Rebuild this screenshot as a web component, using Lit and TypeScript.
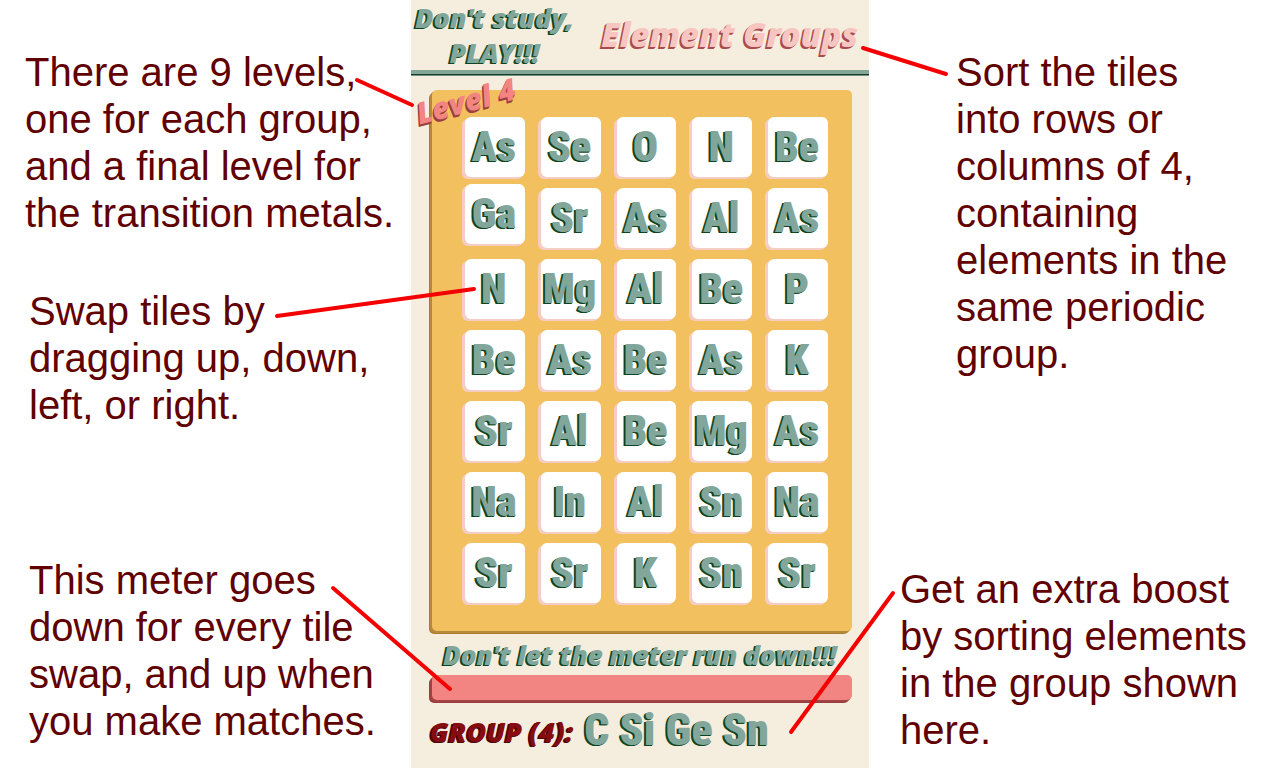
import { LitElement, html, css } from "lit";
import { customElement, property } from "lit/decorators.js";
import { classMap } from "lit/directives/class-map.js";

const TILES: string[] = [
  "As", "Se", "O", "N", "Be",
  "Ga", "Sr", "As", "Al", "As",
  "N", "Mg", "Al", "Be", "P",
  "Be", "As", "Be", "As", "K",
  "Sr", "Al", "Be", "Mg", "As",
  "Na", "In", "Al", "Sn", "Na",
  "Sr", "Sr", "K", "Sn", "Sr",
];
const LIFTED_TILE = 5;

@customElement("game-board")
class GameBoard extends LitElement {
  @property({ type: Array }) tiles: string[] = TILES;

  static styles = css`
    :host {
      display: block;
      position: relative;
      margin: 0 17px 0 21px;
    }
    .board {
      display: grid;
      grid-template-columns: repeat(5, minmax(0, 1fr));
      gap: 11px 16px;
      padding: 27px 24px 28px 33px;
      background: #f3c05f;
      border-radius: 5px;
      box-shadow: -1px 1px #b8893a, -2px 2px #b8893a, -3px 3px #a97c33;
    }
    .tile {
      display: flex;
      justify-content: center;
      height: 60px;
      border: 0;
      padding: 0 2px 0 0;
      border-radius: 6px;
      background: #fff;
      color: #82a699;
      font: 900 42px/60px "Roboto Condensed", Lato, sans-serif;
      text-shadow: -1px 1px #0d4420, -2px 1px #0d4420;
      box-shadow: -1px 1px #f5cdc4, -2px 2px #f5cdc4, -3px 2px #f5cdc4;
      white-space: nowrap;
    }
    .lifted {
      position: relative;
      top: -4px;
    }
    .level {
      position: absolute;
      left: -17px;
      top: -6px;
      margin: 0;
      transform: rotate(-15deg);
      font: italic 800 30px/34px "Open Sans", sans-serif;
      color: #f28582;
      text-shadow: -1px 1px #98403f, -2px 2px #98403f;
      white-space: nowrap;
    }
  `;

  render() {
    return html`
      <div class="board">
        ${this.tiles.map(
          (t, i) => html`<button class=${classMap({ tile: true, lifted: i === LIFTED_TILE })}>${t}</button>`
        )}
      </div>
      <p class="level">Level 4</p>
    `;
  }
}

@customElement("app-root")
class AppRoot extends LitElement {
  static styles = css`
    :host {
      display: block;
      position: relative;
      min-height: 100vh;
      background: #fff;
    }
    .page {
      display: grid;
      grid-template-columns: 411fr 458fr 411fr;
      min-height: 100vh;
    }
    .side {
      display: flex;
      flex-direction: column;
      padding-top: 49px;
      color: #600000;
      font: 40px/47px "Liberation Sans", Arial, sans-serif;
      white-space: nowrap;
    }
    .note {
      margin: 0;
      padding-left: 29px;
    }
    .levels {
      padding-left: 25px;
      margin-bottom: 51px;
    }
    .swap {
      margin-bottom: 128px;
    }
    .sort {
      padding-left: 87px;
      margin-bottom: 188px;
    }
    .boost {
      padding-left: 31px;
    }
    .game {
      background: #f5eedf;
      min-width: 0;
    }
    .header {
      display: flex;
      justify-content: space-between;
      align-items: center;
      height: 70px;
      padding: 0 11px 0 4px;
      border-bottom: 4px solid #83a699;
      box-shadow: 0 1px #173f2a, 0 2px #6f9484;
      margin-bottom: 16px;
      white-space: nowrap;
    }
    .script {
      margin: 0;
      font: italic 800 26px/34px "Open Sans", sans-serif;
      color: #82a699;
      text-shadow: -1px 1px #0d4420, -2px 1px #0d4420;
      text-align: center;
    }
    .slogan {
      font-size: 27px;
      line-height: 35px;
    }
    .title {
      margin: 0;
      font: italic 800 33px/40px "Open Sans", sans-serif;
      color: #f7c6c1;
      text-shadow: -1px 1px #a94b4d, -2px 2px #a94b4d;
    }
    .warning {
      display: block;
      margin: 7px 0 3px;
      white-space: nowrap;
    }
    .meter {
      display: block;
      appearance: none;
      width: auto;
      height: 25px;
      margin: 0 17px 0 21px;
      border-radius: 5px;
      background: #f28582;
      box-shadow: -1px 1px #a34243, -2px 2px #a34243, -3px 3px #983c3c;
    }
    .meter::-webkit-meter-bar {
      border: 0;
      background: transparent;
    }
    .meter::-webkit-meter-optimum-value {
      background: transparent;
    }
    .meterbox {
      display: grid;
    }
    .group {
      display: flex;
      align-items: center;
      margin: 3px 0 0 19px;
      gap: 11px;
      white-space: nowrap;
    }
    .grouplabel {
      color: #860c10;
      font: italic 800 27px/50px "Open Sans", sans-serif;
      text-shadow: -1px 1px #4d0508, -2px 1px #4d0508;
      padding-top: 4px;
    }
    .elements {
      color: #82a699;
      font: 900 44px/50px "Roboto Condensed", Lato, sans-serif;
      text-shadow: -1px 1px #0d4420, -2px 1px #0d4420;
    }
    .pointers {
      position: absolute;
      inset: 0;
      width: 100%;
      height: 768px;
      pointer-events: none;
      stroke: #f40000;
      stroke-width: 4;
      stroke-linecap: round;
    }
  `;

  render() {
    return html`
      <main class="page">
        <section class="side">
          <p class="note levels">There are 9 levels,<br />one for each group,<br />and a final level for<br />the transition metals.</p>
          <p class="note swap">Swap tiles by<br />dragging up, down,<br />left, or right.</p>
          <p class="note">This meter goes<br />down for every tile<br />swap, and up when<br />you make matches.</p>
        </section>
        <section class="game">
          <header class="header">
            <p class="script slogan">Don't study,<br />PLAY!!!</p>
            <h1 class="title">Element Groups</h1>
          </header>
          <game-board></game-board>
          <label class="script warning" for="moves">Don't let the meter run down!!!</label>
          <div class="meterbox"><meter class="meter" id="moves" value="1"></meter></div>
          <div class="group">
            <span class="grouplabel">GROUP (4):</span>
            <span class="elements">C Si Ge Sn</span>
          </div>
        </section>
        <section class="side">
          <p class="note sort">Sort the tiles<br />into rows or<br />columns of 4,<br />containing<br />elements in the<br />same periodic<br />group.</p>
          <p class="note boost">Get an extra boost<br />by sorting elements<br />in the group shown<br />here.</p>
        </section>
      </main>
      <svg class="pointers" viewBox="0 0 1280 768" aria-hidden="true">
        <line x1="357" y1="80" x2="412" y2="105" />
        <line x1="277" y1="316" x2="474" y2="289" />
        <line x1="333" y1="588" x2="450" y2="689" />
        <line x1="863" y1="48" x2="946" y2="74" />
        <line x1="893" y1="593" x2="791" y2="732" />
      </svg>
    `;
  }
}
